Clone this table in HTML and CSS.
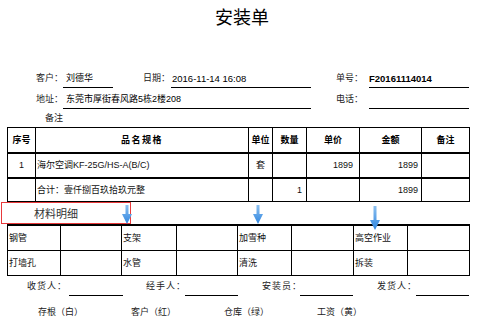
FILE: index.html
```html
<!DOCTYPE html>
<html lang="zh">
<head>
<meta charset="utf-8">
<title>安装单</title>
<link rel="stylesheet" href="styles.css">
</head>
<body>
<div class="page">
  <h1 class="title">安装单</h1>

  <div class="info">
    <span class="lbl">客户：</span>
    <span class="val v-name">刘德华</span>
    <span class="sp"></span>
    <span class="lbl">日期：</span>
    <span class="val v-date">2016-11-14 16:08</span>
    <span class="sp"></span>
    <span class="lbl">单号：</span>
    <span class="val v-no">F20161114014</span>

    <span class="lbl">地址：</span>
    <span class="val v-addr">东莞市厚街春风路5栋2楼208</span>
    <span class="sp"></span>
    <span class="lbl">电话：</span>
    <span class="val v-no"></span>
  </div>
  <div class="remark">备注</div>

  <div class="items">
    <div class="c h">序号</div>
    <div class="c h wide">品名规格</div>
    <div class="c h">单位</div>
    <div class="c h">数量</div>
    <div class="c h">单价</div>
    <div class="c h">金额</div>
    <div class="c h">备注</div>

    <div class="c r1 ctr">1</div>
    <div class="c r1 left">海尔空调KF-25G/HS-A(B/C)</div>
    <div class="c r1 ctr">套</div>
    <div class="c r1"></div>
    <div class="c r1 num p6">1899</div>
    <div class="c r1 num p3">1899</div>
    <div class="c r1"></div>

    <div class="c r2"></div>
    <div class="c r2 left">合计：壹仟捌百玖拾玖元整</div>
    <div class="c r2"></div>
    <div class="c r2 num p4">1</div>
    <div class="c r2"></div>
    <div class="c r2 num p3">1899</div>
    <div class="c r2"></div>
  </div>

  <div class="materials">
    <div class="mat-title">材料明细</div>
    <div class="mat-grid">
      <div class="m">钢管</div><div class="m"></div>
      <div class="m">支架</div><div class="m"></div>
      <div class="m">加雪种</div><div class="m"></div>
      <div class="m">高空作业</div><div class="m"></div>
      <div class="m">打墙孔</div><div class="m"></div>
      <div class="m">水管</div><div class="m"></div>
      <div class="m">清洗</div><div class="m"></div>
      <div class="m">拆装</div><div class="m"></div>
    </div>
    <svg class="arrow a1" width="10" height="19" viewBox="0 0 10 19"><defs><linearGradient id="g1" x1="0" y1="0" x2="0" y2="1"><stop offset="0" stop-color="#8cc0f0"/><stop offset="1" stop-color="#2f86e0"/></linearGradient></defs><path d="M3.5 0 H6.5 V9 H10 L5 19 L0 9 H3.5 Z" fill="url(#g1)"/></svg>
    <svg class="arrow a2" width="10" height="19" viewBox="0 0 10 19"><path d="M3.5 0 H6.5 V9 H10 L5 19 L0 9 H3.5 Z" fill="url(#g1)"/></svg>
    <svg class="arrow a3" width="10" height="24" viewBox="0 0 10 24"><path d="M3.5 0 H6.5 V14 H10 L5 24 L0 14 H3.5 Z" fill="url(#g1)"/></svg>
  </div>

  <div class="sign">
    <span class="slbl">收货人：</span><span class="sline"></span><span></span>
    <span class="slbl">经手人：</span><span class="sline"></span><span></span>
    <span class="slbl">安装员：</span><span class="sline"></span><span></span>
    <span class="slbl">发货人：</span><span class="sline"></span>
  </div>

  <div class="copies">
    <span>存根（白）</span>
    <span>客户（红）</span>
    <span>仓库（绿）</span>
    <span>工资（黄）</span>
  </div>
</div>
</body>
</html>
```

FILE: styles.css
```css
* { box-sizing: border-box; }
html, body { margin: 0; padding: 0; background: #fff; }
body {
  font-family: "Liberation Sans", "Noto Sans CJK SC", sans-serif;
  font-size: 9px;
  color: #111;
}
.page { width: 484px; height: 330px; overflow: hidden; }

.title {
  margin: 0;
  padding-top: 5px;
  height: 27px;
  line-height: 22px;
  font-size: 18px;
  font-weight: normal;
  text-align: center;
  font-family: "Noto Sans CJK SC", sans-serif;
  color: #000;
}

.info {
  margin-top: 43px;
  padding-left: 36px;
  display: grid;
  grid-template-columns: 27px 50px 30px 28px 140px 25px 33px 100px;
  grid-auto-rows: 18px;
  row-gap: 3px;
}
.lbl { line-height: 17px; color: #222; white-space: nowrap; }
.val {
  height: 18px;
  line-height: 17px;
  border-bottom: 1px solid #000;
  white-space: nowrap;
  color: #000;
}
.v-name { padding-left: 3px; }
.v-date { padding-left: 1px; font-size: 9.5px; }
.v-no { font-weight: bold; font-size: 9.5px; }
.v-addr { grid-column: 2 / 6; padding-left: 3px; }

.remark {
  margin-top: 1px;
  height: 16px;
  line-height: 16px;
  padding-left: 45px;
  color: #222;
}

.items {
  margin-top: 1px;
  margin-left: 7px;
  width: 463px;
  display: grid;
  grid-template-columns: 28px 213px 24px 34px 53px 62px 48px;
  border-left: 1px solid #000;
  border-top: 1px solid #000;
}
.c {
  border-right: 1px solid #000;
  border-bottom: 1px solid #000;
  white-space: nowrap;
  overflow: hidden;
}
.h {
  height: 26px;
  line-height: 24px;
  border-bottom-width: 2px;
  text-align: center;
  font-weight: bold;
  color: #000;
}
.h.wide { letter-spacing: 1.5px; }
.r1 { height: 25px; line-height: 23px; border-bottom-width: 2px; }
.r2 { height: 23px; line-height: 22px; }
.ctr { text-align: center; }
.left { padding-left: 1px; }
.num { text-align: right; }
.p6 { padding-right: 6px; }
.p4 { padding-right: 4px; }
.p3 { padding-right: 3px; }

.materials { position: relative; }
.mat-title {
  margin-left: 1px;
  width: 130px;
  height: 22px;
  border: 1px solid #e8393b;
  padding-left: 32px;
  line-height: 20px;
  font-size: 11px;
  font-family: "Noto Sans CJK SC", sans-serif;
  color: #333;
}
.mat-grid {
  margin-left: 7px;
  width: 463px;
  display: grid;
  grid-template-columns: 53px 61px 55px 61px 54px 62px 54px 62px;
  border-left: 1px solid #000;
  border-top: 2px solid #000;
}
.m {
  height: 25px;
  line-height: 24px;
  border-right: 1px solid #000;
  border-bottom: 1px solid #000;
  padding-left: 1px;
  white-space: nowrap;
}
.arrow { position: absolute; }
.a1 { left: 122px; top: 3px; }
.a2 { left: 253px; top: 3px; }
.a3 { left: 370px; top: 4px; }

.sign {
  margin-top: 1px;
  padding-left: 27px;
  display: grid;
  grid-template-columns: 42px 54px 23px 39px 53px 24px 38px 53px 24px 39px 53px;
  height: 19px;
}
.slbl { line-height: 18px; letter-spacing: 1px; color: #222; white-space: nowrap; }
.sline { height: 19px; border-bottom: 1px solid #000; }

.copies {
  margin-top: 8px;
  padding-left: 38px;
  display: flex;
  line-height: 17px;
  color: #222;
}
.copies span { width: 93px; white-space: nowrap; }
```
